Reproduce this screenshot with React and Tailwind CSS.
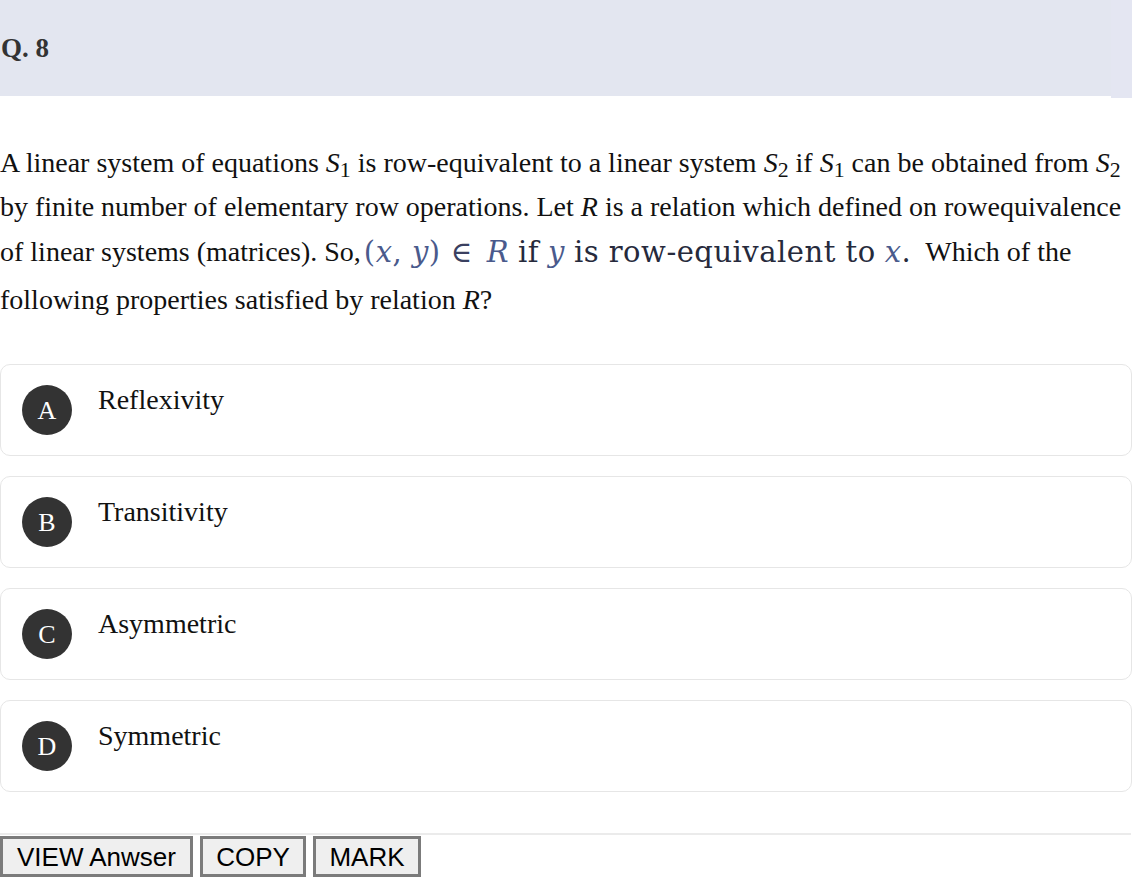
import React from "react";

const serif = { fontFamily: '"Liberation Serif", "Times New Roman", serif' };

function S({ n }) {
  return (
    <span>
      <i>S</i>
      <sub className="text-[0.78em]">{n}</sub>
    </span>
  );
}

function Option({ letter, text }) {
  return (
    <div className="flex items-start rounded-[10px] border border-[#e6e6e6] bg-white h-[92px] pt-[20px] pl-[21px]">
      <div className="flex h-[50px] w-[50px] shrink-0 items-center justify-center rounded-full bg-[#333333] text-[26px] text-white">
        {letter}
      </div>
      <div className="ml-[26px] mt-[1px] text-[28px] leading-[28px] text-[#111]">{text}</div>
    </div>
  );
}

const btn =
  "h-[41px] border-[3px] border-solid border-[#7b7b7b] bg-[#efefef] text-[26px] leading-none text-black";

export default function App() {
  return (
    <div className="relative w-[1132px] h-[878px] overflow-hidden bg-white text-black" style={serif}>
      <div className="flex">
        <div className="flex h-[96px] w-[1111px] items-center bg-[#e3e6f0] pl-[1px]">
          <span className="text-[27px] font-bold text-[#333]">Q. 8</span>
        </div>
        <div className="h-[98px] w-[21px] bg-[#e4e6f2]" />
      </div>

      <div className="mt-[43px] text-[28px] leading-[44px] text-[#111]">
        <div className="whitespace-nowrap">
          A linear system of equations <S n="1" /> is row-equivalent to a linear system <S n="2" /> if <S n="1" /> can be
          obtained from <S n="2" />
        </div>
        <div className="whitespace-nowrap">
          by finite number of elementary row operations. Let <i>R</i> is a relation which defined on rowequivalence
        </div>
        <div className="flex items-center whitespace-nowrap h-[46px]">
          <span>of linear systems (matrices). So,</span>
          <span
            className="ml-[3px] inline-flex items-center h-[32px] text-[29px] tracking-[0.5px] text-[#262a3c]"
            style={{ fontFamily: '"DejaVu Serif", "Liberation Serif", serif' }}
          >
            <span className="text-[#4a5a8c]">(<i>x</i>, <i>y</i>)</span>
            <span className="ml-[10px] text-[#3a4060]">∈</span>
            <i className="ml-[14px] text-[#4a5a8c]">R</i>
            <span className="ml-[9px]">if</span>
            <i className="ml-[9px] text-[#4a5a8c]">y</i>
            <span className="ml-[9px]">is row-equivalent to</span>
            <i className="ml-[9px] text-[#4a5a8c]">x</i>
            <span>.</span>
          </span>
          <span className="ml-[14px]">Which of the</span>
        </div>
        <div className="whitespace-nowrap h-[48px] leading-[50px]">
          following properties satisfied by relation <i>R</i>?
        </div>
      </div>

      <div className="mt-[41px] flex flex-col gap-[20px] w-[1132px]">
        <Option letter="A" text="Reflexivity" />
        <Option letter="B" text="Transitivity" />
        <Option letter="C" text="Asymmetric" />
        <Option letter="D" text="Symmetric" />
      </div>

      <div className="mt-[41px] h-[2px] w-[1131px] bg-[#ebebeb]" />
      <div className="flex gap-[7px] pt-[1px]" style={{ fontFamily: '"Liberation Sans", Arial, sans-serif' }}>
        <button className={`${btn} w-[193px]`}>VIEW Anwser</button>
        <button className={`${btn} w-[106px]`}>COPY</button>
        <button className={`${btn} w-[108px]`}>MARK</button>
      </div>
    </div>
  );
}
